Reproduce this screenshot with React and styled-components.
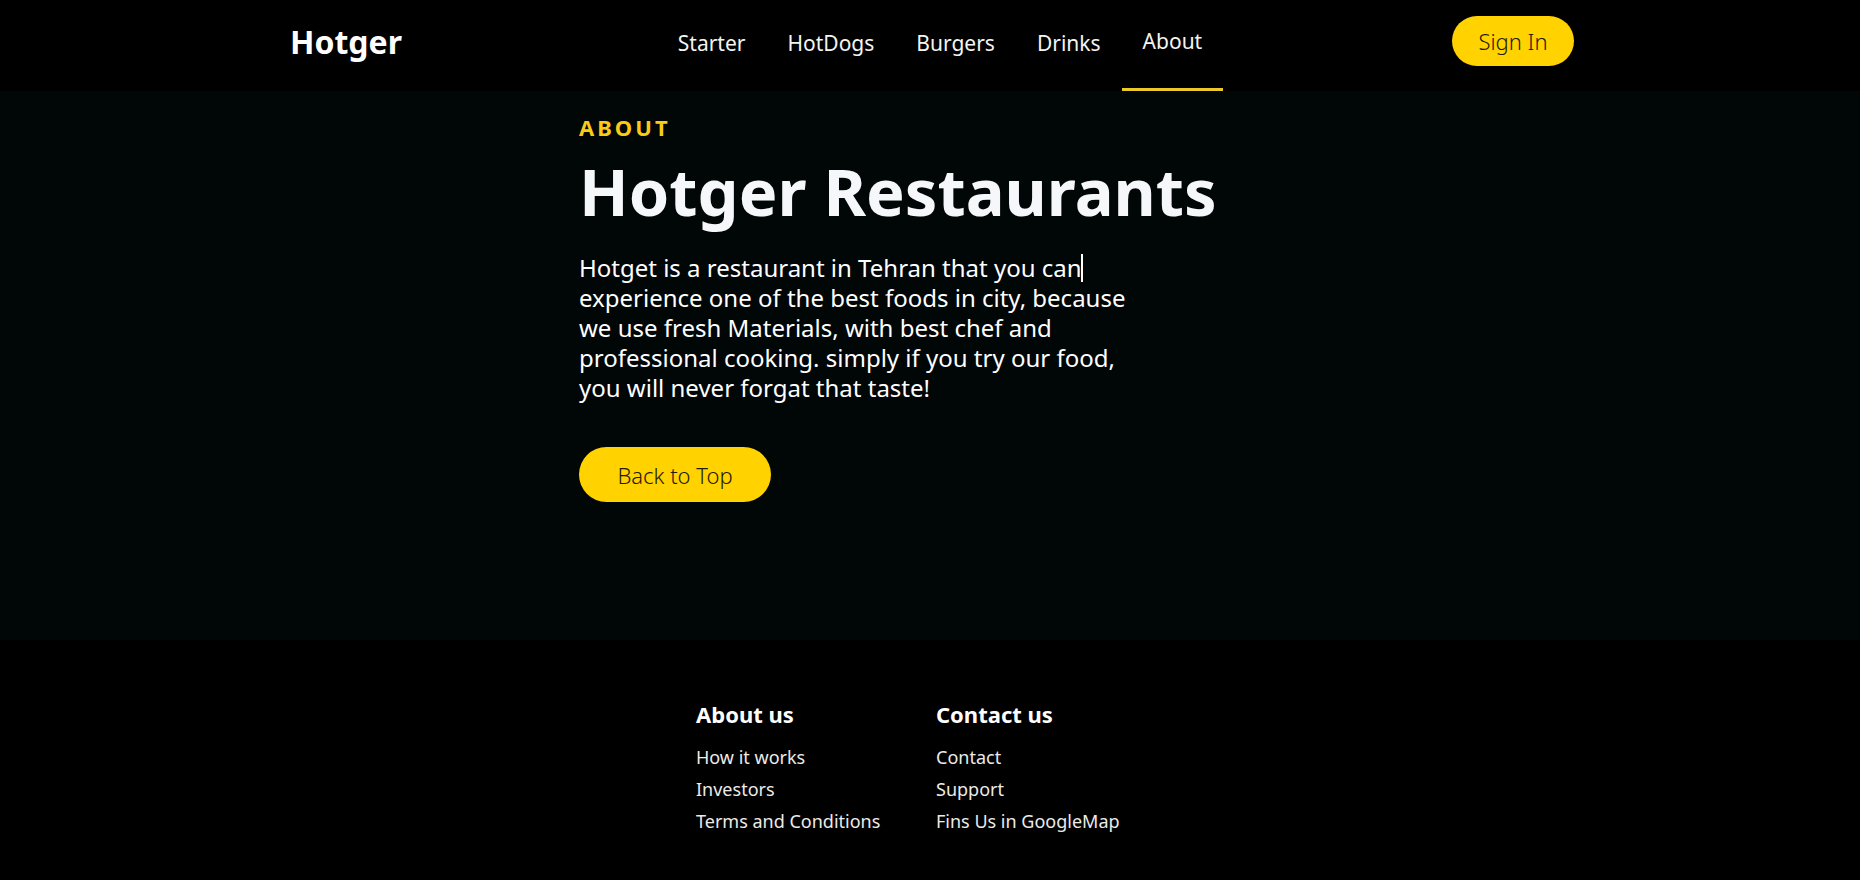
import React from "react";
import styled, { createGlobalStyle } from "styled-components";

const GlobalStyle = createGlobalStyle`
  *, *::before, *::after { box-sizing: border-box; }
  body {
    margin: 0;
    background: #000;
    color: #fff;
    font-family: "Noto Sans", "Open Sans", sans-serif;
  }
  h1, h2, p, ul { margin: 0; padding: 0; }
  ul { list-style: none; }
  a { color: inherit; text-decoration: none; }
`;

const Page = styled.div`
  display: flex;
  flex-direction: column;
  min-height: 100vh;
`;

const Header = styled.header`
  background: #000;
  padding: 0 24px;
`;

const HeaderInner = styled.div`
  display: grid;
  grid-template-columns: auto 1fr auto;
  align-items: center;
  max-width: 1288px;
  margin: 0 auto;
`;

const Logo = styled.a`
  min-width: 142px;
  margin-bottom: 8px;
  padding-left: 4px;
  font-size: 32px;
  font-weight: 700;
  line-height: 44px;
`;

const NavList = styled.ul`
  display: flex;
  justify-content: center;
`;

const NavLink = styled.a`
  display: flex;
  align-items: center;
  height: 91px;
  padding: 0 21px 6px;
  border-bottom: ${({ $active }) => ($active ? "3px solid #ecc92b" : "0")};
  color: #f4f4f2;
  font-size: 21px;
  line-height: 28px;
`;

const PillButton = styled.button`
  border: 0;
  border-radius: 28px;
  background: #ffd200;
  color: #1f1c08;
  font-family: inherit;
  font-size: 22px;
  font-weight: 300;
  line-height: 28px;
  cursor: pointer;
`;

const SignInButton = styled(PillButton)`
  width: 122px;
  height: 50px;
  margin-bottom: 10px;
`;

const BackButton = styled(PillButton)`
  width: 192px;
  height: 55px;
  margin-top: 44px;
`;

const Hero = styled.main`
  background: #010606;
  padding: 21px 24px 138px;
`;

const HeroInner = styled.div`
  max-width: 702px;
  margin: 0 auto;
`;

const Eyebrow = styled.p`
  color: #f9cb18;
  font-size: 22px;
  font-weight: 700;
  line-height: 30px;
  letter-spacing: 3px;
  text-transform: uppercase;
`;

const Title = styled.h1`
  margin-top: 9px;
  color: #f5f7fa;
  font-size: 65px;
  font-weight: 700;
  line-height: 80px;
`;

const Description = styled.p`
  max-width: 560px;
  margin-top: 22px;
  font-size: 24px;
  line-height: 30px;
`;

const Caret = styled.span`
  position: relative;

  &::after {
    content: "";
    position: absolute;
    top: 3px;
    left: -1px;
    width: 2px;
    height: 28px;
    background: #fff;
  }
`;

const Footer = styled.footer`
  flex: 1;
  background: #000;
  padding: 59px 24px 43px;
`;

const FooterColumns = styled.div`
  display: grid;
  grid-template-columns: repeat(2, 228px);
  column-gap: 12px;
  justify-content: center;
`;

const FooterHeading = styled.h2`
  font-size: 22px;
  font-weight: 700;
  line-height: 30px;
  margin-bottom: 12px;
`;

const FooterLink = styled.a`
  color: #ecebe8;
  font-size: 18px;
  line-height: 32px;
`;

const FooterItem = styled.li`
  display: flex;
`;

const navItems = ["Starter", "HotDogs", "Burgers", "Drinks", "About"];

const footerGroups = [
  { title: "About us", links: ["How it works", "Investors", "Terms and Conditions"] },
  { title: "Contact us", links: ["Contact", "Support", "Fins Us in GoogleMap"] },
];

export default function App() {
  return (
    <>
      <GlobalStyle />
      <Page>
        <Header>
          <HeaderInner>
            <Logo href="#">Hotger</Logo>
            <nav>
              <NavList>
                {navItems.map((item) => (
                  <li key={item}>
                    <NavLink
                      href={`#${item.toLowerCase()}`}
                      $active={item === "About"}
                      aria-current={item === "About" ? "page" : undefined}
                    >
                      {item}
                    </NavLink>
                  </li>
                ))}
              </NavList>
            </nav>
            <SignInButton type="button">Sign In</SignInButton>
          </HeaderInner>
        </Header>
        <Hero>
          <HeroInner>
            <Eyebrow>About</Eyebrow>
            <Title>Hotger Restaurants</Title>
            <Description>
              Hotget is a restaurant in Tehran that you can
              <Caret /> experience one of the best foods in city, because we use
              fresh Materials, with best chef and professional cooking. simply
              if you try our food, you will never forgat that taste!
            </Description>
            <BackButton type="button" onClick={() => window.scrollTo({ top: 0 })}>
              Back to Top
            </BackButton>
          </HeroInner>
        </Hero>
        <Footer>
          <FooterColumns>
            {footerGroups.map(({ title, links }) => (
              <section key={title}>
                <FooterHeading>{title}</FooterHeading>
                <ul>
                  {links.map((link) => (
                    <FooterItem key={link}>
                      <FooterLink href="#">{link}</FooterLink>
                    </FooterItem>
                  ))}
                </ul>
              </section>
            ))}
          </FooterColumns>
        </Footer>
      </Page>
    </>
  );
}
